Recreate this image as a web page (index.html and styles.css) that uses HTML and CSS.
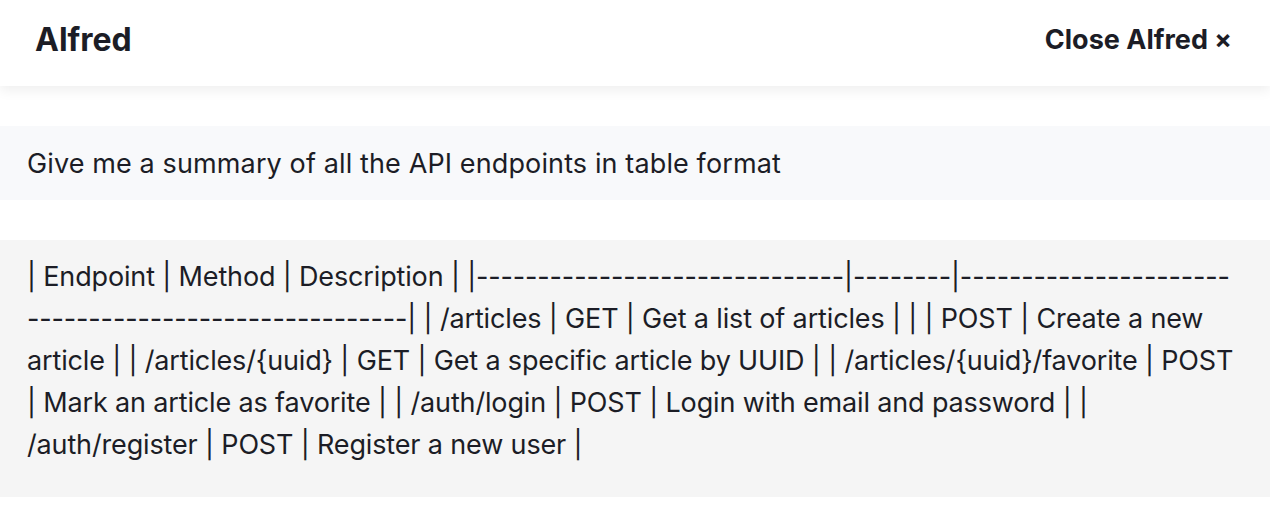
FILE: index.html
```html
<!DOCTYPE html>
<html>
    <head>
        <title>Alfred</title>
        <link rel="stylesheet" href="styles.css">
    </head>
  <body>
    <header class="topbar">
        <h1 class="title">Alfred</h1>
        <a class="close">Close Alfred <span class="x">&times;</span></a>
    </header>
    <main class="chat">
        <div class="msg question">Give me a summary of all the API endpoints in table format</div>
        <div class="msg answer">| Endpoint | Method | Description | |------------------------------|--------|-----------------------------------------------------| | /articles | GET | Get a list of articles | | | POST | Create a new article | | /articles/{uuid} | GET | Get a specific article by UUID | | /articles/{uuid}/favorite | POST | Mark an article as favorite | | /auth/login | POST | Login with email and password | | /auth/register | POST | Register a new user |</div>
    </main>
  </body>
</html>
```

FILE: styles.css
```css
* {
    margin: 0;
    padding: 0;
    box-sizing: border-box;
}
html, body {
    height: 100%;
}
body {
    font-family: Inter, 'Noto Sans', sans-serif;
    color: #1c1d26;
    background: #fff;
}
.topbar {
    display: flex;
    align-items: center;
    justify-content: space-between;
    height: 86px;
    padding: 0 38px 8px 35px;
    background: #fff;
    box-shadow: 0 4px 12px rgba(0, 0, 0, .07);
}
.title {
    font-size: 32px;
    font-weight: 700;
}
.close {
    font-size: 27px;
    font-weight: 700;
    cursor: pointer;
}
.close .x {
    font-size: 26px;
}
.chat {
    padding-top: 40px;
}
.msg {
    padding: 0 27px;
    font-size: 27px;
}
.question {
    display: flex;
    align-items: center;
    height: 74px;
    background: #f8f9fb;
    letter-spacing: .12px;
}
.answer {
    margin-top: 40px;
    padding: 16px 30px 31px 27px;
    line-height: 42px;
    letter-spacing: -.15px;
    background: #f5f5f5;
    overflow-wrap: anywhere;
}
```
